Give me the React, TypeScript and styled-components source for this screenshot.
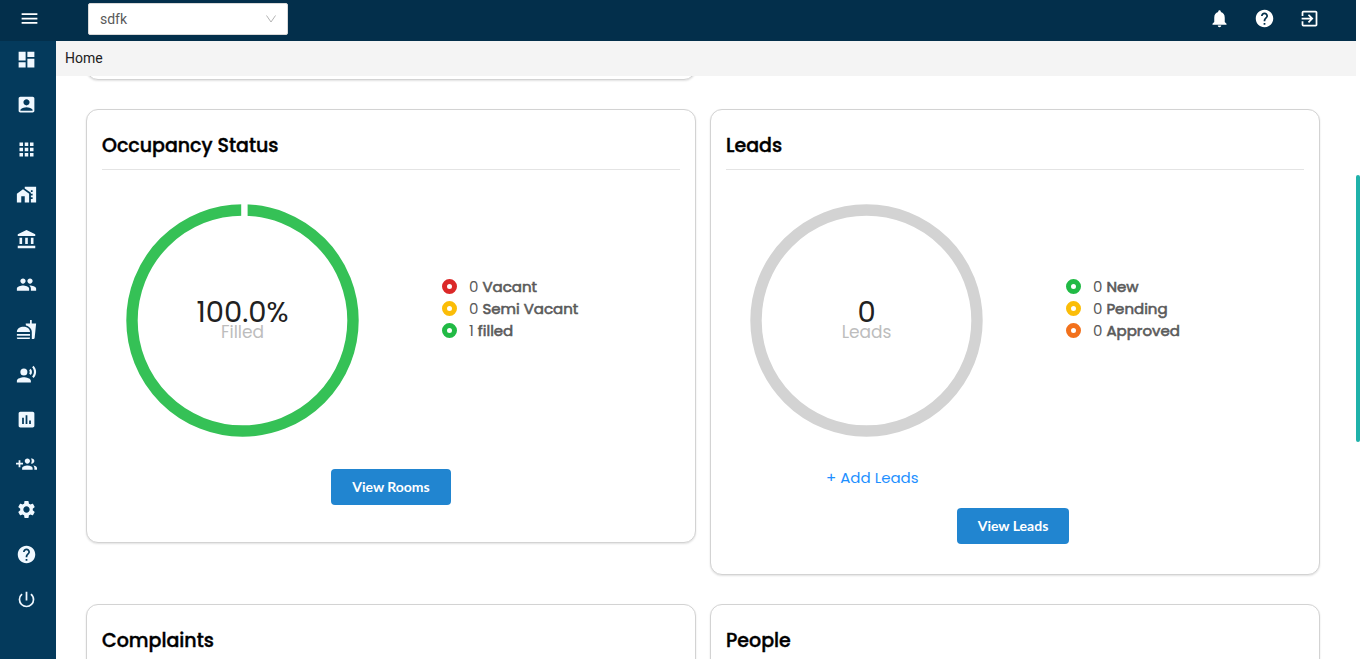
import React from "react";
import styled, { createGlobalStyle } from "styled-components";
import {
  MdAccountBalance,
  MdAccountBox,
  MdApps,
  MdAssessment,
  MdDashboard,
  MdExitToApp,
  MdFastfood,
  MdHelp,
  MdMenu,
  MdNotifications,
  MdPeople,
  MdPowerSettingsNew,
  MdRecordVoiceOver,
  MdSettings,
} from "react-icons/md";

const GlobalStyle = createGlobalStyle`
  *, *::before, *::after { box-sizing: border-box; }
  body { margin: 0; background: #fff; font-family: Roboto, sans-serif; font-size: 14px; color: #212121; }
  button, select { font: inherit; }
`;

const Page = styled.div`
  display: grid;
  grid-template-columns: 1fr 4px;
  height: 100vh;
  overflow: hidden;
`;

const Shell = styled.div`
  display: flex;
  flex-direction: column;
  min-width: 0;
  min-height: 0;
`;

const Header = styled.header`
  display: flex;
  align-items: center;
  flex: none;
  height: 41px;
  padding: 0 36px 4px 19px;
  background: #032f4b;
`;

const IconButton = styled.button`
  display: flex;
  padding: 0;
  border: 0;
  background: none;
  color: ${(p) => p.color ?? "#fff"};
  font-size: 21px;
  cursor: pointer;
`;

const HeaderActions = styled.div`
  display: flex;
  gap: 24px;
  margin-left: auto;
`;

const SelectBox = styled.label`
  display: grid;
  align-items: center;
  width: 200px;
  margin-left: 48px;

  > * {
    grid-area: 1 / 1;
  }
  > svg {
    justify-self: end;
    margin-right: 12px;
    pointer-events: none;
  }
`;

const Select = styled.select`
  appearance: none;
  width: 100%;
  height: 32px;
  padding: 0 11px;
  border: 1px solid #d9d9d9;
  border-radius: 2px;
  background: #fff;
  color: #595959;
`;

const Body = styled.div`
  display: flex;
  flex: 1;
  min-height: 0;
`;

const Sidebar = styled.nav`
  display: flex;
  flex-direction: column;
  align-items: flex-start;
  flex: none;
  gap: 24px;
  width: 56px;
  padding: 8px 16px;
  background: #043a5c;
`;

const Main = styled.main`
  display: flex;
  flex-direction: column;
  flex: 1;
  min-width: 0;
`;

const Breadcrumb = styled.div`
  flex: none;
  padding: 0 9px;
  background: #f4f4f4;
  line-height: 35px;
`;

const Content = styled.div`
  flex: 1;
  min-height: 0;
  padding: 0 36px 0 30px;
  overflow: hidden;
`;

const Grid = styled.div`
  display: grid;
  grid-template-columns: 1fr 1fr;
  align-items: start;
  gap: 29px 14px;
  margin-top: -36px;
`;

const Card = styled.section`
  min-height: 40px;
  padding: 15px;
  border: 1px solid #d3d3d3;
  border-radius: 12px;
  background: #fff;
  box-shadow: 0 1px 2px rgba(0, 0, 0, 0.12);
`;

const PanelCard = styled(Card)`
  display: flex;
  flex-direction: column;
  padding-bottom: ${(p: { $bottom?: number }) => p.$bottom ?? 30}px;
`;

const CardTitle = styled.h2`
  margin: 0 0 34px;
  padding-bottom: 2px;
  border-bottom: 1px solid #e4e4e4;
  color: #000;
  font: 500 19px/42px Poppins, Inter, sans-serif;
  -webkit-text-stroke: 0.4px;
`;

const Summary = styled.div`
  display: flex;
  align-items: center;
  gap: 83px;
  margin-left: 24px;
`;

const ChartBox = styled.div`
  display: grid;
  place-items: center;
  flex: none;

  > * {
    grid-area: 1 / 1;
  }
`;

const ChartLabel = styled.div`
  padding-top: 2px;
  text-align: center;
  font: 17px/20px Poppins, Inter, sans-serif;
  color: #bdbdbd;

  strong {
    display: block;
    color: #212121;
    font-size: 29px;
    font-weight: 400;
  }
`;

const Legend = styled.ul`
  margin: 0;
  padding: 0 0 24px;
  list-style: none;
  font: 15px/22px Poppins, Inter, sans-serif;
  color: #5a5a5a;

  li {
    display: flex;
    align-items: center;
    gap: 4px;
  }
  b {
    font-weight: 400;
    -webkit-text-stroke: 0.6px;
  }
`;

const Marker = styled.span`
  width: 15px;
  height: 15px;
  margin-right: 8px;
  border: 5px solid ${(p) => p.color};
  border-radius: 50%;
`;

const AddLink = styled.a`
  align-self: flex-start;
  margin: 30px 0 19px 100px;
  color: #1e90ff;
  font: 15px/22px Poppins, Inter, sans-serif;
  text-decoration: none;
`;

const ViewButton = styled.button`
  align-self: center;
  height: 36px;
  margin-right: 4px;
  padding: 0 21px;
  border: 0;
  border-radius: 4px;
  background: #2185d0;
  color: #fff;
  font: 700 14px/36px Lato, sans-serif;
  cursor: pointer;
`;

const RoomsAction = styled.div`
  display: flex;
  justify-content: center;
  padding: 32px 0 0 4px;
`;

const Track = styled.div`
  display: flex;
  flex-direction: column;
  background: #fff;

  &::before {
    content: "";
    flex: 175;
  }
  &::after {
    content: "";
    flex: 217;
  }
`;

const Thumb = styled.div`
  flex: 267;
  border-radius: 2px;
  background: #20b2aa;
`;

function HomeWorkIcon() {
  return (
    <svg width="1em" height="1em" viewBox="0 0 24 24" fill="currentColor" aria-hidden="true">
      <path d="M1 11v10h5v-7h4v7h5V11L8 6z" />
      <path d="M10 3v2l7 5v1h2v2h-2v2h2v2h-2v4h6V3H10zm9 6h-2V7h2v2z" />
    </svg>
  );
}

function GroupAddIcon() {
  return (
    <svg width="1em" height="1em" viewBox="0 0 24 24" fill="currentColor" aria-hidden="true">
      <path d="M8 10H5V7H3v3H0v2h3v3h2v-3h3v-2zm10 1c1.66 0 2.99-1.34 2.99-3S19.66 5 18 5c-.32 0-.63.05-.91.14.57.81.9 1.79.9 2.86s-.34 2.04-.9 2.86c.28.09.59.14.91.14zm-5 0c1.66 0 2.99-1.34 2.99-3S14.66 5 13 5c-1.66 0-3 1.34-3 3s1.34 3 3 3zm6.62 2.16c.83.73 1.38 1.66 1.38 2.84v2h3v-2c0-1.54-2.37-2.49-4.38-2.84zM13 13c-2 0-6 1-6 3v2h12v-2c0-2-4-3-6-3z" />
    </svg>
  );
}

const menuItems = [
  { label: "Dashboard", Icon: MdDashboard },
  { label: "Profile", Icon: MdAccountBox },
  { label: "Apps", Icon: MdApps },
  { label: "Properties", Icon: HomeWorkIcon },
  { label: "Accounts", Icon: MdAccountBalance },
  { label: "People", Icon: MdPeople },
  { label: "Food", Icon: MdFastfood },
  { label: "Complaints", Icon: MdRecordVoiceOver },
  { label: "Reports", Icon: MdAssessment },
  { label: "Leads", Icon: GroupAddIcon },
  { label: "Settings", Icon: MdSettings },
  { label: "Help", Icon: MdHelp },
  { label: "Log out", Icon: MdPowerSettingsNew },
];

const headerItems = [
  { label: "Notifications", Icon: MdNotifications },
  { label: "Help", Icon: MdHelp },
  { label: "Exit", Icon: MdExitToApp },
];

type LegendEntry = { count: number; label: string; color: string };

type OverviewProps = {
  value: string;
  caption: string;
  color: string;
  split?: boolean;
  entries: LegendEntry[];
};

function Overview({ value, caption, color, split, entries }: OverviewProps) {
  return (
    <Summary>
      <ChartBox>
        <svg width="233" height="233" viewBox="0 0 233 233" aria-hidden="true">
          <circle cx="116.5" cy="116.5" r="110.5" fill="none" stroke={color} strokeWidth="11.4" />
          {split && <rect x="115.2" y="0" width="6.4" height="14" fill="#fff" />}
        </svg>
        <ChartLabel>
          <strong>{value}</strong>
          {caption}
        </ChartLabel>
      </ChartBox>
      <Legend>
        {entries.map((e) => (
          <li key={e.label}>
            <Marker color={e.color} />
            <span>{e.count}</span>
            <b>{e.label}</b>
          </li>
        ))}
      </Legend>
    </Summary>
  );
}

export default function App() {
  return (
    <>
      <GlobalStyle />
      <Page>
        <Shell>
          <Header>
            <IconButton aria-label="Menu">
              <MdMenu />
            </IconButton>
            <SelectBox>
              <Select aria-label="Property" defaultValue="sdfk">
                <option>sdfk</option>
              </Select>
              <svg width="10" height="8" viewBox="0 0 10 8" fill="none" stroke="#b3b3b3" aria-hidden="true">
                <path d="M.5 .5 5 7 9.500 .5" />
              </svg>
            </SelectBox>
            <HeaderActions>
              {headerItems.map(({ label, Icon }) => (
                <IconButton key={label} aria-label={label}>
                  <Icon />
                </IconButton>
              ))}
            </HeaderActions>
          </Header>
          <Body>
            <Sidebar>
              {menuItems.map(({ label, Icon }) => (
                <IconButton key={label} aria-label={label} color="#f0f8ff">
                  <Icon />
                </IconButton>
              ))}
            </Sidebar>
            <Main>
              <Breadcrumb>Home</Breadcrumb>
              <Content>
                <Grid>
                  <Card />
                  <span />
                  <PanelCard $bottom={37}>
                    <CardTitle>Occupancy Status</CardTitle>
                    <Overview
                      value="100.0%"
                      caption="Filled"
                      color="#35c156"
                      split
                      entries={[
                        { count: 0, label: "Vacant", color: "#db2828" },
                        { count: 0, label: "Semi Vacant", color: "#fbbd08" },
                        { count: 1, label: "filled", color: "#21ba45" },
                      ]}
                    />
                    <RoomsAction>
                      <ViewButton>View Rooms</ViewButton>
                    </RoomsAction>
                  </PanelCard>
                  <PanelCard>
                    <CardTitle>Leads</CardTitle>
                    <Overview
                      value="0"
                      caption="Leads"
                      color="#d3d3d3"
                      entries={[
                        { count: 0, label: "New", color: "#21ba45" },
                        { count: 0, label: "Pending", color: "#fbbd08" },
                        { count: 0, label: "Approved", color: "#f2711c" },
                      ]}
                    />
                    <AddLink href="#leads">+ Add Leads</AddLink>
                    <ViewButton>View Leads</ViewButton>
                  </PanelCard>
                  <PanelCard>
                    <CardTitle>Complaints</CardTitle>
                  </PanelCard>
                  <PanelCard>
                    <CardTitle>People</CardTitle>
                  </PanelCard>
                </Grid>
              </Content>
            </Main>
          </Body>
        </Shell>
        <Track>
          <Thumb />
        </Track>
      </Page>
    </>
  );
}
